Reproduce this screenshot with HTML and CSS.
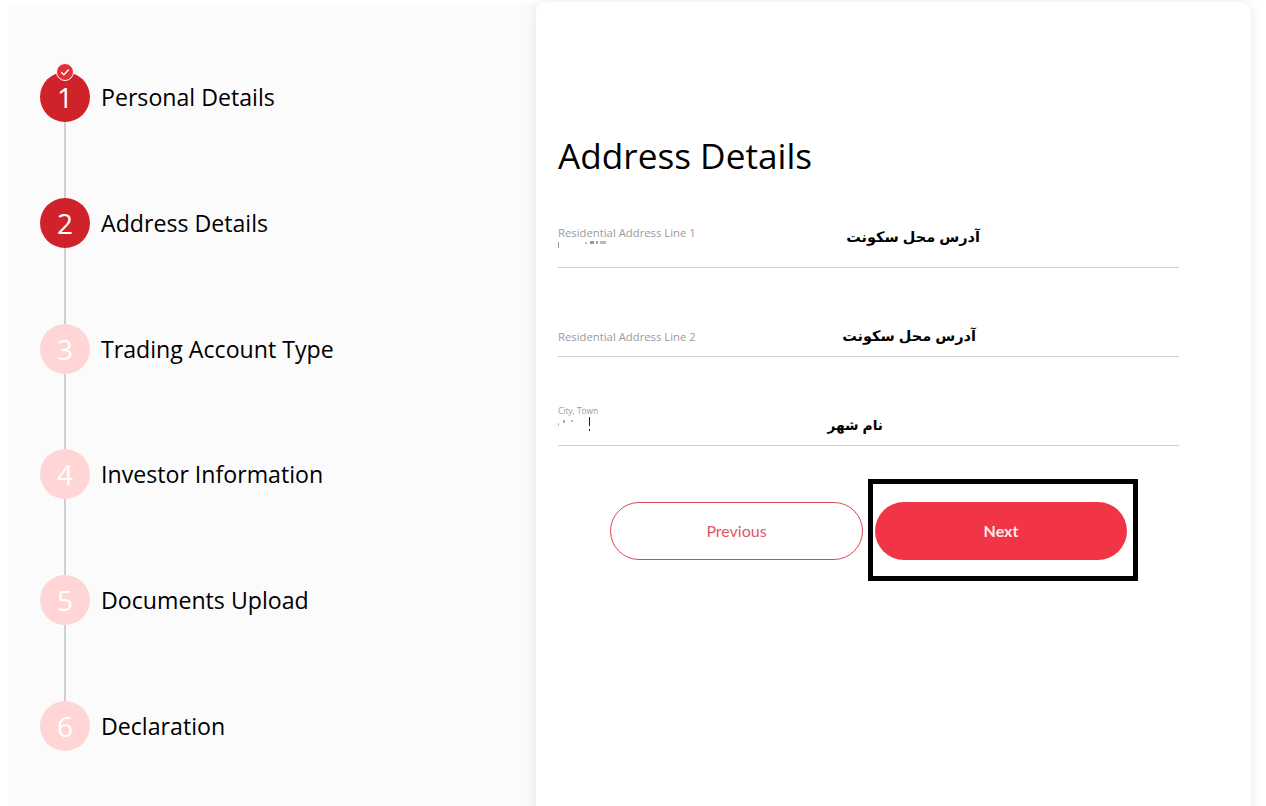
FILE: index.html
```html
<!DOCTYPE html>
<html lang="en">

<head>
    <meta charset="UTF-8">
    <meta name="viewport" content="width=device-width, initial-scale=1.0">
    <title>Address Details</title>
    <link rel="stylesheet" href="styles.css">
</head>

<body>
    <div class="all">
        <div class="steps">
            <div class="step done">
                <div class="circle">1
                    <span class="check">
                        <svg width="12" height="12" viewBox="0 0 12 12">
                            <path d="M2.2 6.3 L4.9 8.8 L9.8 3.4" fill="none" stroke="#fff" stroke-width="1.5" />
                        </svg>
                    </span>
                </div>
                <div class="step-name">Personal Details</div>
            </div>
            <div class="step done">
                <div class="circle">2</div>
                <div class="step-name">Address Details</div>
            </div>
            <div class="step">
                <div class="circle">3</div>
                <div class="step-name">Trading Account Type</div>
            </div>
            <div class="step">
                <div class="circle">4</div>
                <div class="step-name">Investor Information</div>
            </div>
            <div class="step">
                <div class="circle">5</div>
                <div class="step-name">Documents Upload</div>
            </div>
            <div class="step last">
                <div class="circle">6</div>
                <div class="step-name">Declaration</div>
            </div>
        </div>

        <div class="card">
            <h1 class="title">Address Details</h1>

            <div class="field field-one">
                <div class="label">Residential Address Line 1</div>
                <!-- what is left of the blanked out value -->
                <svg class="specks" width="60" height="8" viewBox="0 0 60 8">
                    <rect x="0" y="1" width="1" height="6" fill="#999" />
                    <rect x="27" y="1" width="2" height="2" fill="#bbb" />
                    <rect x="32" y="0" width="4" height="3" fill="#999" />
                    <rect x="38" y="0" width="2" height="3" fill="#aaa" />
                    <rect x="42" y="0" width="6" height="3" fill="#bbb" />
                </svg>
                <div class="note note-one" dir="rtl">آدرس محل سکونت</div>
            </div>
            <div class="field field-two">
                <div class="label">Residential Address Line 2</div>
                <div class="note note-two" dir="rtl">آدرس محل سکونت</div>
            </div>
            <div class="field field-three">
                <div class="label label-small">City, Town</div>
                <svg class="specks" width="60" height="16" viewBox="0 0 60 16">
                    <rect x="0" y="6" width="1" height="3" fill="#bbb" />
                    <rect x="5" y="3" width="2" height="3" fill="#aaa" />
                    <rect x="13" y="3" width="2" height="2" fill="#bbb" />
                    <rect x="31" y="0" width="1" height="9" fill="#222" />
                    <rect x="31" y="12" width="1" height="2" fill="#222" />
                </svg>
                <div class="note note-three" dir="rtl">نام شهر</div>
            </div>

            <div class="buttons">
                <button class="btn btn-prev">Previous</button>
                <div class="next-wrap">
                    <button class="btn btn-next">Next</button>
                    <div class="highlight"></div>
                </div>
            </div>
        </div>
    </div>
</body>

</html>
```

FILE: styles.css
```css
* {
    box-sizing: border-box;
}

html,
body {
    height: 100%;
}

body {
    margin: 0;
    background-color: #fff;
    overflow: hidden;
    font-family: "Open Sans", "Liberation Sans", sans-serif;
}

.all {
    display: flex;
    height: 100%;
    margin-left: 8px;
    padding-top: 2px;
}

.steps {
    width: 528px;
    height: 100%;
    margin-top: 2px;
    padding: 68px 0 0 32px;
    background-color: #fbfbfb;
}

.step {
    display: flex;
    align-items: flex-start;
    height: 125.8px;
    position: relative;
}

/* line between the circles */
.step::before {
    content: "";
    position: absolute;
    left: 24px;
    top: 50px;
    bottom: 0;
    width: 2px;
    background-color: #d0d0d0;
}

.step.last::before {
    display: none;
}

.circle {
    position: relative;
    width: 50px;
    height: 50px;
    border-radius: 50%;
    background-color: #ffd5d5;
    color: #fff;
    font-size: 28px;
    line-height: 50px;
    text-align: center;
}

.done .circle {
    background-color: #cf222b;
}

.check {
    position: absolute;
    top: -9px;
    left: 16px;
    width: 18px;
    height: 18px;
    border: 1.5px solid #fff;
    border-radius: 50%;
    background-color: #e0303a;
    display: flex;
    align-items: center;
    justify-content: center;
}

.step-name {
    margin-left: 11px;
    font-size: 23.15px;
    line-height: 50px;
    color: #000;
}

.card {
    flex: none;
    width: 715px;
    height: 830px;
    padding: 127px 0 0 22px;
    background-color: #fff;
    border-radius: 10px;
    box-shadow: 0 0 14px rgba(0, 0, 0, 0.09);
}

.title {
    margin: 0;
    font-size: 35.2px;
    font-weight: 400;
    line-height: 52px;
    color: #000;
}

.field {
    position: relative;
    width: 621px;
    border-bottom: 1px solid #cfcfcf;
}

.field-one {
    height: 80px;
    margin-top: 7px;
    padding-top: 37px;
}

.field-two {
    height: 89px;
    padding-top: 61px;
}

.field-three {
    height: 89px;
    padding-top: 48px;
}

.label {
    font-size: 11.3px;
    line-height: 16px;
    color: #9a9a9a;
}

.label-small {
    font-size: 8.4px;
    line-height: 12px;
}

.specks {
    display: block;
}

/* farsi notes written over the form */
.note {
    position: absolute;
    font-family: "Liberation Sans", "DejaVu Sans", sans-serif;
    font-size: 14.5px;
    font-weight: 700;
    line-height: 20px;
    color: #000;
    white-space: nowrap;
}

.note-one {
    top: 39px;
    right: 199px;
}

.note-two {
    top: 58px;
    right: 203px;
}

.note-three {
    top: 59px;
    right: 296px;
    font-size: 13.8px;
}

.buttons {
    display: flex;
    gap: 12px;
    margin: 56px 0 0 52px;
}

.btn {
    width: 252px;
    height: 58px;
    padding-bottom: 2px;
    border-radius: 29px;
    font-family: "Lato", "Liberation Sans", sans-serif;
    font-size: 16px;
}

.btn-prev {
    width: 253px;
    border: 1px solid #d9495a;
    background-color: #fff;
    color: #e0566a;
}

.btn-next {
    display: block;
    border: 0;
    background-color: #f13546;
    color: #fdeaea;
    font-weight: 700;
}

.next-wrap {
    position: relative;
}

.highlight {
    position: absolute;
    top: -23px;
    left: -7px;
    width: 270px;
    height: 102px;
    border: 5px solid #000;
}
```
